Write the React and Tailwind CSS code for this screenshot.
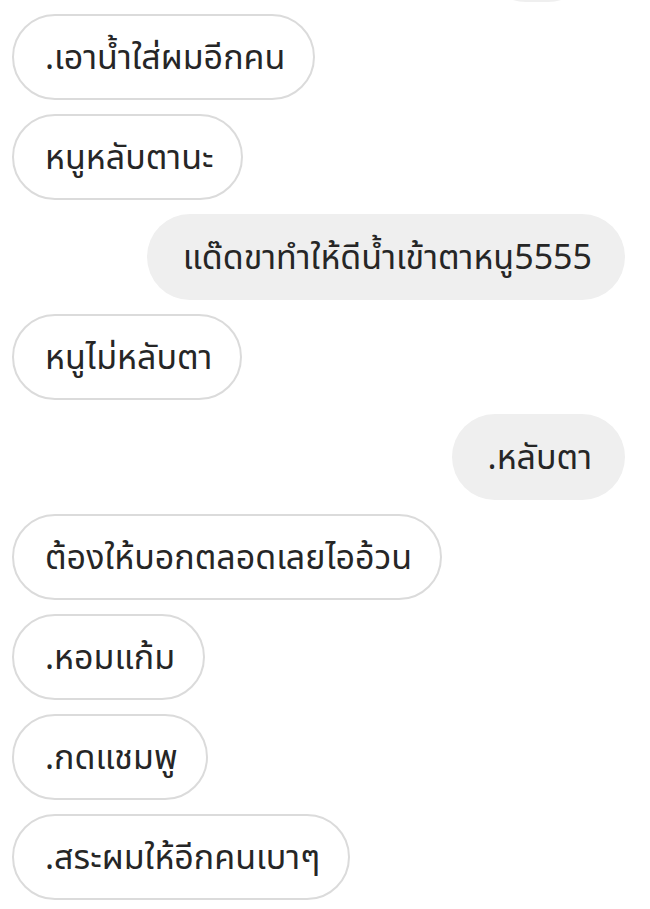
import React from 'react';

const messages = [
  { from: 'them', text: '.เอาน้ำใส่ผมอีกคน' },
  { from: 'them', text: 'หนูหลับตานะ' },
  { from: 'me', text: 'แด๊ดขาทำให้ดีน้ำเข้าตาหนู5555' },
  { from: 'them', text: 'หนูไม่หลับตา' },
  { from: 'me', text: '.หลับตา' },
  { from: 'them', text: 'ต้องให้บอกตลอดเลยไออ้วน' },
  { from: 'them', text: '.หอมแก้ม' },
  { from: 'them', text: '.กดแชมพู' },
  { from: 'them', text: '.สระผมให้อีกคนเบาๆ' },
];

function Bubble({ from, text }) {
  if (from === 'me') {
    return (
      <div className="flex justify-end">
        <div className="h-[86px] flex items-center rounded-full bg-[#efefef] pl-[36px] pr-[33px] pt-[3px] whitespace-nowrap">
          {text}
        </div>
      </div>
    );
  }
  return (
    <div className="flex justify-start">
      <div className="h-[86px] flex items-center rounded-full border-2 border-[#dbdbdb] bg-white pl-[31px] pr-[28px] pt-[3px] whitespace-nowrap">
        {text}
      </div>
    </div>
  );
}

export default function App() {
  return (
    <div
      className="w-[650px] h-[909px] overflow-hidden bg-white text-[#262626] text-[34px] leading-[44px]"
      style={{ fontFamily: '"Noto Sans Thai", "Noto Sans Thai UI", "Noto Sans", sans-serif' }}
    >
      <div className="flex flex-col gap-[14px] pl-3 pr-[25px] -mt-[86px]">
        <div className="flex justify-end pr-[33px] -mb-[2px]">
          <div className="h-[88px] w-[110px] rounded-full bg-[#efefef]" />
        </div>
        {messages.map((m, i) => (
          <Bubble key={i} {...m} />
        ))}
      </div>
    </div>
  );
}
